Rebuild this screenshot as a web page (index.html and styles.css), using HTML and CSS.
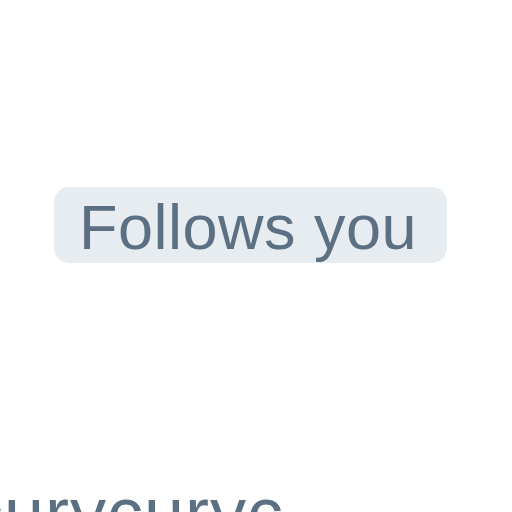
FILE: index.html
```html
<!DOCTYPE html>
<html>
<head>
<meta charset="utf-8">
<link rel="stylesheet" href="styles.css">
</head>
<body>
<div class="page">
  <div class="row">
    <span class="badge">Follows you</span>
  </div>
  <div class="handle">curycuryc</div>
</div>
</body>
</html>
```
FILE: styles.css
```css
html, body {
  margin: 0;
  padding: 0;
  background: #ffffff;
  overflow: hidden;
}
.page {
  width: 512px;
  height: 512px;
  overflow: hidden;
  font-family: "Liberation Sans", Arial, sans-serif;
  color: #5b7083;
}
.row {
  display: flex;
  padding-top: 187px;
  padding-left: 54px;
}
.badge {
  display: inline-block;
  background: #e6ecf0;
  border-radius: 15px;
  height: 76px;
  box-sizing: border-box;
  padding: 5px 30px 0 25px;
  font-size: 63px;
  line-height: 71px;
  letter-spacing: 0.5px;
  white-space: nowrap;
}
.handle {
  margin-top: 214px;
  margin-left: -33px;
  font-size: 72px;
  line-height: 72px;
  letter-spacing: 1px;
  white-space: nowrap;
}
```
